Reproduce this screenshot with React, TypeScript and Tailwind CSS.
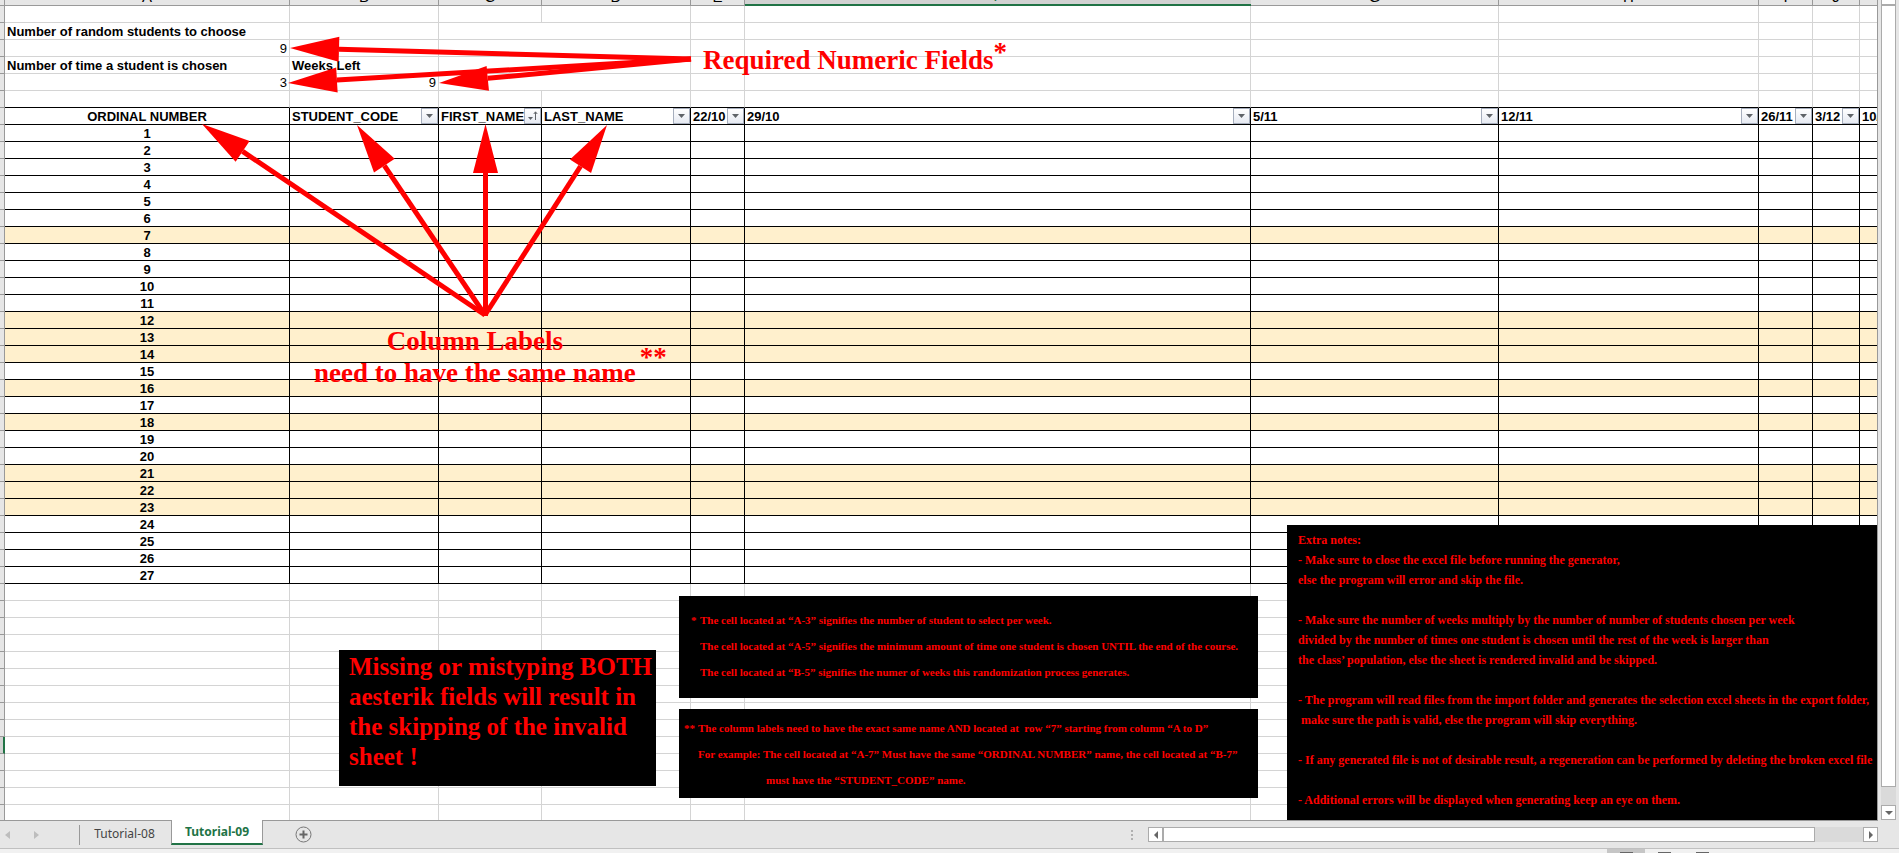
import React from "react";

type Column = { letter: string; label: string; width: string; filter?: "menu" | "sorted" };

const columns: Column[] = [
  { letter: "A", label: "ORDINAL NUMBER", width: "w-[285px]" },
  { letter: "B", label: "STUDENT_CODE", width: "w-[149px]", filter: "menu" },
  { letter: "C", label: "FIRST_NAME", width: "w-[103px]", filter: "sorted" },
  { letter: "D", label: "LAST_NAME", width: "w-[149px]", filter: "menu" },
  { letter: "E", label: "22/10", width: "w-[54px]", filter: "menu" },
  { letter: "F", label: "29/10", width: "w-[506px]", filter: "menu" },
  { letter: "G", label: "5/11", width: "w-[248px]", filter: "menu" },
  { letter: "H", label: "12/11", width: "w-[260px]", filter: "menu" },
  { letter: "I", label: "26/11", width: "w-[54px]", filter: "menu" },
  { letter: "J", label: "3/12", width: "w-[47px]", filter: "menu" },
  { letter: "K", label: "10/12", width: "w-[54px]" },
];

const highlighted = new Set([7, 12, 13, 14, 16, 18, 21, 22, 23]);
const students = Array.from({ length: 27 }, (_, i) => i + 1);
const emptyRows = Array.from({ length: 14 }, (_, i) => i);

const light = "h-[17px] overflow-hidden whitespace-nowrap border-r border-b border-[#d4d4d4] px-[2px] pt-[2px] pb-0";
const dark = "h-[17px] overflow-hidden whitespace-nowrap border-r border-b border-black p-0";

function Gutter({ selected = false }: { selected?: boolean }) {
  return (
    <th
      className={
        selected
          ? "h-[17px] border-r-2 border-b border-r-[#217346] border-b-[#999] bg-[#d2d2d2] p-0"
          : "h-[17px] border-r border-b border-[#999] bg-[#e6e6e6] p-0"
      }
    />
  );
}

function FilterButton({ kind, label }: { kind: "menu" | "sorted"; label: string }) {
  return (
    <button
      aria-label={`Filter ${label}`}
      className="flex h-4 w-[17px] shrink-0 items-center justify-center border border-[#a6aebd] bg-linear-to-b from-white to-[#e6eaf2]"
    >
      {kind === "menu" ? (
        <svg width="7" height="4" viewBox="0 0 7 4">
          <path d="M0 0H7L3.5 4Z" fill="#5f6368" />
        </svg>
      ) : (
        <svg width="13" height="12" viewBox="0 0 13 12">
          <path d="M2 7H7L4.500 10Z" fill="#5f6368" />
          <path d="M9.500 10V2M7.800 4L9.500 1.800L11.200 4" fill="none" stroke="#5f6368" />
        </svg>
      )}
    </button>
  );
}

function BlankCells({ from = 0 }: { from?: number }) {
  return (
    <>
      {columns.slice(from).map((c) => (
        <td key={c.letter} className={light} />
      ))}
    </>
  );
}

function Sheet() {
  return (
    <table className="w-full table-fixed border-separate border-spacing-0 text-[13px] leading-[14px]">
      <colgroup>
        <col className="w-[5px]" />
        {columns.map((c) => (
          <col key={c.letter} className={c.width} />
        ))}
      </colgroup>
      <thead>
        <tr>
          <th className="border-r border-b border-[#999] bg-[#e6e6e6] p-0" />
          {columns.map((c) => (
            <th
              key={c.letter}
              className={
                c.letter === "F"
                  ? "border-b-2 border-[#217346] bg-[#d2d2d2] p-0 font-normal text-[#217346]"
                  : "border-r border-b border-[#999] bg-[#e6e6e6] p-0 font-normal"
              }
            >
              <div
                className={
                  c.letter === "F"
                    ? "flex h-1 items-end justify-center overflow-hidden text-[15px] leading-4"
                    : "flex h-[5px] items-end justify-center overflow-hidden text-[15px] leading-4"
                }
              >
                {c.letter}
              </div>
            </th>
          ))}
        </tr>
      </thead>
      <tbody>
        <tr>
          <Gutter />
          <BlankCells />
        </tr>
        <tr>
          <Gutter />
          <td className={`${light} font-bold`}>Number of random students to choose</td>
          <td className={light} />
          <td className={light} colSpan={2} />
          <BlankCells from={4} />
        </tr>
        <tr>
          <Gutter />
          <td className={`${light} text-right`}>9</td>
          <td className={light} />
          <td className={light} colSpan={2} />
          <BlankCells from={4} />
        </tr>
        <tr>
          <Gutter />
          <td className={`${light} font-bold`}>Number of time a student is chosen</td>
          <td className={`${light} font-bold`}>Weeks Left</td>
          <td className={light} colSpan={2} />
          <BlankCells from={4} />
        </tr>
        <tr>
          <Gutter />
          <td className={`${light} text-right`}>3</td>
          <td className={`${light} text-right`}>9</td>
          <td className={light} colSpan={2} />
          <BlankCells from={4} />
        </tr>
        <tr>
          <Gutter />
          {columns.map((c) => (
            <td key={c.letter} className="h-[17px] border-r border-b border-r-[#d4d4d4] border-b-black p-0" />
          ))}
        </tr>
        <tr>
          <Gutter />
          {columns.map((c) => (
            <th key={c.letter} className={dark}>
              <div className="flex h-4 items-center">
                <span
                  className={
                    c.letter === "A" ? "flex-1 pt-[2px] text-center" : "min-w-0 flex-1 pt-[2px] pl-[2px] text-left"
                  }
                >
                  {c.label}
                </span>
                {c.filter && <FilterButton kind={c.filter} label={c.label} />}
              </div>
            </th>
          ))}
        </tr>
        {students.map((n) => (
          <tr key={n} className={highlighted.has(n) ? "bg-[#fff0cd]" : "bg-white"}>
            <Gutter />
            {columns.map((c) => (
              <td key={c.letter} className={`${dark} text-center font-bold`}>
                {c.letter === "A" ? <div className="pt-[2px]">{n}</div> : null}
              </td>
            ))}
          </tr>
        ))}
        {emptyRows.map((i) => (
          <tr key={i}>
            <Gutter selected={i === 9} />
            <BlankCells />
          </tr>
        ))}
      </tbody>
    </table>
  );
}

type Point = [number, number];

function Arrow({ from, to }: { from: Point; to: Point }) {
  const dx = to[0] - from[0];
  const dy = to[1] - from[1];
  const len = Math.hypot(dx, dy);
  const ux = dx / len;
  const uy = dy / len;
  const bx = to[0] - ux * 49;
  const by = to[1] - uy * 49;
  const half = 12.5;
  return (
    <g>
      <line x1={from[0]} y1={from[1]} x2={bx} y2={by} stroke="#f00" strokeWidth="5" />
      <polygon
        fill="#f00"
        points={`${to[0]},${to[1]} ${bx - uy * half},${by + ux * half} ${bx + uy * half},${by - ux * half}`}
      />
    </g>
  );
}

function Annotations() {
  return (
    <div className="absolute inset-0 overflow-hidden font-['Liberation_Serif',serif] font-bold text-[#f00]">
      <svg className="absolute top-0 left-0" width="760" height="330" aria-hidden="true">
        <Arrow from={[691, 59]} to={[290, 48]} />
        <Arrow from={[691, 59]} to={[288, 83]} />
        <Arrow from={[691, 59]} to={[439, 83]} />
        <Arrow from={[485, 315]} to={[202, 124]} />
        <Arrow from={[485, 315]} to={[357, 125]} />
        <Arrow from={[485.5, 316]} to={[485.5, 124]} />
        <Arrow from={[485, 315]} to={[607, 125]} />
      </svg>

      <p className="absolute top-[44px] left-[703px] flex text-[27px] leading-8 whitespace-nowrap">
        Required Numeric Fields<span className="-mt-2">*</span>
      </p>
      <div className="absolute top-[325px] left-[314px] flex items-center gap-1 text-[27px] leading-8 whitespace-nowrap">
        <p className="text-center">
          Column Labels
          <br />
          need to have the same name
        </p>
        <span>**</span>
      </div>

      <div className="absolute top-[650px] left-[339px] h-[136px] w-[317px] bg-black pt-[2px] pl-[10px] text-[25px] leading-[30px] whitespace-nowrap">
        Missing or mistyping BOTH
        <br />
        aesterik fields will result in
        <br />
        the skipping of the invalid
        <br />
        sheet !
      </div>

      <div className="absolute top-[596px] left-[679px] flex h-[102px] w-[579px] items-center bg-black pb-[2px] pl-3 text-[11px] leading-[26px] whitespace-nowrap">
        <div className="flex">
          <span className="w-[9px]">*</span>
          <p>
            The cell located at “A-3” signifies the number of student to select per week.
            <br />
            The cell located at “A-5” signifies the minimum amount of time one student is chosen UNTIL the end of the course.
            <br />
            The cell located at “B-5” signifies the numer of weeks this randomization process generates.
          </p>
        </div>
      </div>

      <div className="absolute top-[709px] left-[679px] flex h-[89px] w-[579px] items-center bg-black pl-[5px] text-[11px] leading-[26px] whitespace-nowrap">
        <div className="flex">
          <span className="w-[14px]">**</span>
          <p className="whitespace-pre">
            The column labels need to have the exact same name AND located at  row “7” starting from column “A to D”
            <br />
            For example: The cell located at “A-7” Must have the same “ORDINAL NUMBER” name, the cell located at “B-7”
            <br />
            <span className="pl-[68px]">must have the “STUDENT_CODE” name.</span>
          </p>
        </div>
      </div>

      <div className="absolute top-[525px] left-[1287px] flex h-[295px] w-[591px] flex-col gap-5 bg-black pt-[5px] pl-[11px] text-[12px] leading-5 whitespace-nowrap">
        <p>
          Extra notes:
          <br />- Make sure to close the excel file before running the generator,
          <br />
          else the program will error and skip the file.
        </p>
        <p>
          - Make sure the number of weeks multiply by the number of number of students chosen per week
          <br />
          divided by the number of times one student is chosen until the rest of the week is larger than
          <br />
          the class’ population, else the sheet is rendered invalid and be skipped.
        </p>
        <p>
          - The program will read files from the import folder and generates the selection excel sheets in the export folder,
          <br />
          &nbsp;make sure the path is valid, else the program will skip everything.
        </p>
        <p>- If any generated file is not of desirable result, a regeneration can be performed by deleting the broken excel file</p>
        <p>- Additional errors will be displayed when generating keep an eye on them.</p>
      </div>
    </div>
  );
}

const scrollButton = "flex size-[15px] shrink-0 items-center justify-center border border-[#ababab] bg-white";

function BottomBar() {
  return (
    <footer className="shrink-0">
      <div className="flex h-[29px] border-b border-[#c0c0c0] bg-[#e6e6e6] pr-[21px]">
        <div className="flex w-[79px] items-center gap-6 border-t border-[#999] pl-[5px]">
          <button aria-label="Previous sheet">
            <svg width="5" height="8" viewBox="0 0 5 8"><path d="M5 0V8L0 4Z" fill="#bdbdbd" /></svg>
          </button>
          <button aria-label="Next sheet">
            <svg width="5" height="8" viewBox="0 0 5 8"><path d="M0 0V8L5 4Z" fill="#bdbdbd" /></svg>
          </button>
        </div>
        <nav className="flex font-['Noto_Sans',sans-serif] text-[12px]">
          <div className="flex items-center border-t border-[#999]">
            <span className="h-5 w-px bg-[#999]" />
            <button className="w-[91px] pr-[2px] pb-px text-[#444]">Tutorial-08</button>
          </div>
          <button className="mb-[3px] w-[92px] border-x border-b-2 border-x-[#999] border-b-[#217346] bg-white font-bold text-[#217346]">
            Tutorial-09
          </button>
        </nav>
        <div className="flex flex-1 items-center border-t border-[#999] pl-8">
          <button aria-label="New sheet">
            <svg width="17" height="17" viewBox="0 0 17 17">
              <circle cx="8.500" cy="8.500" r="7.500" fill="none" stroke="#777" />
              <path d="M8.500 4.500V12.500M4.500 8.500H12.500" stroke="#666" strokeWidth="2" />
            </svg>
          </button>
          <svg className="ml-auto" width="2" height="10" viewBox="0 0 2 10">
            <path d="M0 0H2V2H0ZM0 4H2V6H0ZM0 8H2V10H0Z" fill="#b0b0b0" />
          </svg>
        </div>
        <div className="flex w-[745px] items-center border-t border-[#999] pl-[15px]">
          <button aria-label="Scroll left" className={scrollButton}>
            <svg width="4" height="8" viewBox="0 0 4 8"><path d="M4 0V8L0 4Z" fill="#666" /></svg>
          </button>
          <div className="flex h-[15px] flex-1 bg-[#dadada] pr-12">
            <div className="flex-1 border border-[#ababab] bg-white" />
          </div>
          <button aria-label="Scroll right" className={scrollButton}>
            <svg width="4" height="8" viewBox="0 0 4 8"><path d="M0 0V8L4 4Z" fill="#666" /></svg>
          </button>
        </div>
      </div>
      <div className="flex h-1 justify-end bg-[#f1f1f1] pr-[178px]">
        <span className="flex w-[38px] items-end justify-center bg-[#c6c6c6]"><i className="h-px w-[13px] bg-[#666]" /></span>
        <span className="flex w-[38px] items-end justify-center"><i className="h-px w-[13px] bg-[#666]" /></span>
        <span className="flex w-[38px] items-end justify-center"><i className="h-px w-[13px] bg-[#666]" /></span>
      </div>
    </footer>
  );
}

export default function App() {
  return (
    <div className="flex h-screen flex-col overflow-hidden bg-[#e6e6e6] font-['Liberation_Sans',Arial,sans-serif] text-black">
      <div className="flex min-h-0 flex-1">
        <main className="relative min-w-0 flex-1 overflow-hidden border-r border-[#999] bg-white">
          <Sheet />
          <Annotations />
        </main>
        <div className="flex w-[21px] flex-col pr-[3px] pl-[3px]">
          <div className="h-[5px] shrink-0 border-x border-b border-[#ababab] bg-white" />
          <div className="flex flex-1 flex-col bg-[#dadada] pb-[18px]">
            <div className="flex-1 border border-[#ababab] bg-white" />
          </div>
          <button aria-label="Scroll down" className={scrollButton}>
            <svg width="8" height="4" viewBox="0 0 8 4"><path d="M0 0H8L4 4Z" fill="#666" /></svg>
          </button>
        </div>
      </div>
      <BottomBar />
    </div>
  );
}
